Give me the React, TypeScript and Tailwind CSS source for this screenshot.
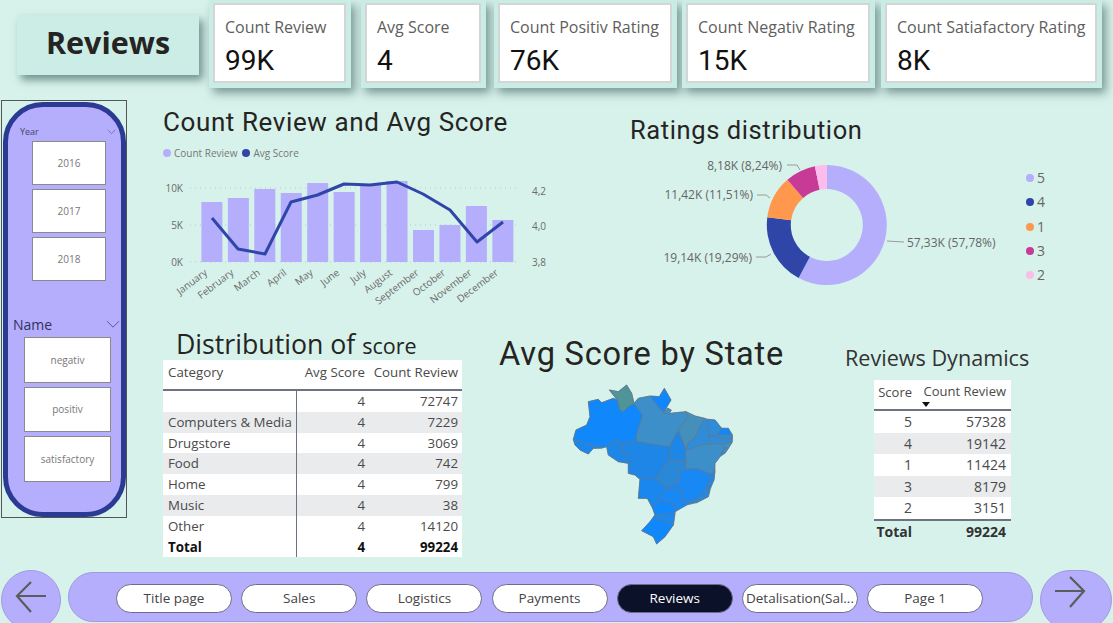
import React from "react";

const seg = { fontFamily: '"Open Sans", "Noto Sans", sans-serif' };
const din = { fontFamily: 'Roboto, "Noto Sans", sans-serif' };

const kpis = [
  { label: "Count Review", value: "99K", w: "w-[142px]", m: "ml-[10px]" },
  { label: "Avg Score", value: "4", w: "w-[125px]", m: "ml-[10px]" },
  { label: "Count Positiv Rating", value: "76K", w: "w-[183px]", m: "ml-[8px]" },
  { label: "Count Negativ Rating", value: "15K", w: "w-[193px]", m: "ml-[5px]" },
  { label: "Count Satiafactory Rating", value: "8K", w: "w-[221px]", m: "ml-[6px]" },
];

const months = ["January", "February", "March", "April", "May", "June", "July", "August", "September", "October", "November", "December"];
const tops = [202, 198, 189, 193, 183, 192, 185, 181, 230, 225, 206, 220];
const line = [[212, 218], [238, 249], [265, 254], [291, 202], [317.5, 195], [344, 184], [370, 185], [397, 182], [423, 194], [450, 210], [477, 242], [503, 222]];

function Kpi({ label, value, w, m }: { label: string; value: string; w: string; m: string }) {
  return (
    <div className={`${w} ${m} h-[88px] bg-[#c9ece5] pl-[4px] pr-[5px] pt-[3px] pb-[5px] shadow-[4px_5px_9px_rgba(70,105,105,0.65)]`}>
      <div className="h-full border-2 border-[#d4d6d6] bg-white pl-[10px] pt-[10px]">
        <div className="text-[16px] leading-[24px] text-[#605e5c] whitespace-nowrap" style={seg}>{label}</div>
        <div className="mt-[6px] text-[28px] leading-[32px] text-[#111111]" style={din}>{value}</div>
      </div>
    </div>
  );
}

function SlicerButton({ label, w, h }: { label: string; w: string; h: string }) {
  return (
    <div className={`${w} ${h} flex items-center justify-center border-[1.5px] border-[#8a8a8a] bg-white text-[10px] text-[#777777]`} style={seg}>
      {label}
    </div>
  );
}

function Chevron({ size }: { size: number }) {
  return (
    <svg width={size} height={size * 0.6} viewBox="0 0 14 8" fill="none" stroke="#5a5a8a" strokeWidth="1">
      <path d="M1 1l6 6 6-6" />
    </svg>
  );
}

function Sidebar() {
  return (
    <div className="ml-[1px] mt-[12px] h-[418px] w-[126px] border border-[#555555] pl-[1px] pr-0 pt-[1px]">
      <div className="h-[415px] w-[123px] rounded-[40px] border-[5px] border-[#2b3a92] bg-[#b4aefc]">
        <div className="mt-[19px] flex h-[12px] items-center justify-between pl-[12px] pr-[5px]">
          <span className="text-[9px] leading-[12px] text-[#44446a]" style={seg}>Year</span>
          <Chevron size={9} />
        </div>
        <div className="ml-[24px] mt-[3px] flex flex-col gap-[4px]">
          <SlicerButton label="2016" w="w-[74px]" h="h-[44px]" />
          <SlicerButton label="2017" w="w-[74px]" h="h-[44px]" />
          <SlicerButton label="2018" w="w-[74px]" h="h-[44px]" />
        </div>
        <div className="mt-[33px] flex h-[21px] items-center justify-between pl-[5px] pr-[1px]">
          <span className="text-[14px] leading-[20px] text-[#33335a]" style={seg}>Name</span>
          <Chevron size={14} />
        </div>
        <div className="ml-[16px] mt-[2px] flex flex-col gap-[4px]">
          <SlicerButton label="negativ" w="w-[87px]" h="h-[46px]" />
          <SlicerButton label="positiv" w="w-[87px]" h="h-[45px]" />
          <SlicerButton label="satisfactory" w="w-[87px]" h="h-[46px]" />
        </div>
      </div>
    </div>
  );
}

function ComboChart() {
  return (
    <svg width="400" height="150" viewBox="163 165 400 150" className="block">
      {[188, 225, 262].map((y) => (
        <line key={y} x1="190" x2="520" y1={y} y2={y} stroke="#b9c9c6" strokeWidth="1" strokeDasharray="1 4" />
      ))}
      {tops.map((t, i) => (
        <rect key={i} x={201.4 + i * 26.45} y={t} width="21" height={262 - t} fill="#b4aefc" />
      ))}
      <polyline points={line.map((p) => p.join(",")).join(" ")} fill="none" stroke="#2f46a8" strokeWidth="3" strokeLinejoin="round" />
      <g fontSize="10" fill="#6b6b6b" style={seg}>
        <text x="183" y="192" textAnchor="end">10K</text>
        <text x="183" y="229" textAnchor="end">5K</text>
        <text x="183" y="266" textAnchor="end">0K</text>
        <text x="532" y="195">4,2</text>
        <text x="532" y="230">4,0</text>
        <text x="532" y="266">3,8</text>
        {months.map((m, i) => (
          <text key={m} x={208 + i * 26.45} y="274" textAnchor="end" transform={`rotate(-37 ${208 + i * 26.45} 274)`}>{m}</text>
        ))}
      </g>
    </svg>
  );
}

const slices = [
  { v: 57.78, c: "#b4aefc" },
  { v: 19.29, c: "#2f46a8" },
  { v: 11.51, c: "#ff974d" },
  { v: 8.24, c: "#c73b96" },
  { v: 3.18, c: "#fdbcec" },
];

function arc(cx: number, cy: number, r0: number, r1: number, a0: number, a1: number) {
  const p = (r: number, a: number) => `${(cx + r * Math.sin(a)).toFixed(2)} ${(cy - r * Math.cos(a)).toFixed(2)}`;
  const large = a1 - a0 > Math.PI ? 1 : 0;
  return `M${p(r1, a0)}A${r1} ${r1} 0 ${large} 1 ${p(r1, a1)}L${p(r0, a1)}A${r0} ${r0} 0 ${large} 0 ${p(r0, a0)}Z`;
}

function Donut() {
  let acc = 0;
  return (
    <svg width="450" height="150" viewBox="630 152 450 150" className="mt-[6px] block">
      {slices.map((s) => {
        const a0 = (acc / 100) * Math.PI * 2;
        acc += s.v;
        const a1 = (acc / 100) * Math.PI * 2;
        return <path key={s.c} d={arc(826.8, 225, 36, 60, a0, a1)} fill={s.c} />;
      })}
      <g fill="none" stroke="#9a9a9a" strokeWidth="1">
        <path d="M787 165h10l3 5" />
        <path d="M757 195h9l4 3" />
        <path d="M756 257h10l5-3" />
        <path d="M887 241l17 1" />
      </g>
      <g fontSize="12" fill="#666666" style={seg}>
        <text x="782" y="170" textAnchor="end">8,18K (8,24%)</text>
        <text x="753" y="199" textAnchor="end">11,42K (11,51%)</text>
        <text x="752" y="262" textAnchor="end">19,14K (19,29%)</text>
        <text x="907" y="247">57,33K (57,78%)</text>
      </g>
      {[["5", 178], ["4", 202], ["1", 227], ["3", 251], ["2", 275]].map(([t, y], i) => (
        <g key={t as string}>
          <circle cx="1030" cy={y as number} r="4" fill={slices[i].c} />
          <text x="1037" y={(y as number) + 5} fontSize="14" fill="#666666" style={seg}>{t}</text>
        </g>
      ))}
    </svg>
  );
}

const silhouette =
  "40,178 48,150 80,135 90,110 85,65 115,58 125,68 160,55 172,60 148,30 175,35 200,15 215,40 222,70 235,55 270,48 298,50 313,25 333,60 312,95 330,100 378,95 405,108 440,117 465,120 485,145 505,145 517,165 517,187 505,205 495,220 480,230 465,250 465,272 462,300 450,330 445,350 410,368 380,375 345,395 345,400 340,435 315,470 290,492 280,470 245,452 270,425 285,405 278,385 262,355 235,355 240,298 225,285 205,280 205,250 175,245 145,225 140,200 125,205 100,205 85,222 60,210 45,195";

const states: [string, string][] = [
  ["#1088fc", "85,65 115,58 125,68 160,55 172,60 180,90 190,95 205,80 222,70 248,105 228,170 232,185 185,188 165,180 140,200 125,203 40,178 48,150 80,135 90,110"],
  ["#4f9499", "148,30 175,35 200,15 215,40 222,70 205,80 190,95 180,90 172,60"],
  ["#1088fc", "270,48 298,50 313,25 333,60 312,95 298,85"],
  ["#3d8fca", "222,70 235,55 270,48 298,85 312,100 330,100 378,95 385,110 355,150 328,200 232,185 228,170 248,105"],
  ["#1a87ee", "40,178 125,203 100,205 85,222 60,210 45,195"],
  ["#1e86e6", "140,200 165,180 185,188 190,215 208,228 205,250 175,245 145,225"],
  ["#1e86e6", "185,188 232,185 328,200 328,235 290,297 240,298 225,285 205,280 205,250 208,228 190,215"],
  ["#1a87ee", "240,298 262,295 290,297 320,325 300,345 300,360 278,385 262,355 235,355"],
  ["#1e86e6", "355,150 378,208 378,240 350,243 328,235 328,200"],
  ["#2a88d8", "328,235 350,243 378,242 378,267 360,270 358,305 320,322 290,297"],
  ["#1888f4", "360,270 378,267 410,265 452,282 440,325 420,350 395,365 370,365 360,325 320,325 320,322 358,305"],
  ["#4490ba", "378,95 405,108 435,115 420,140 405,172 385,188 378,208 355,150 385,110"],
  ["#2e8cd8", "435,115 440,118 447,170 447,192 415,197 385,210 378,208 385,188 405,172 420,140"],
  ["#2e8cd8", "440,118 465,120 485,145 472,165 447,170"],
  ["#1088fc", "485,145 505,145 517,165 495,165 472,165"],
  ["#2e8cd8", "472,165 495,165 517,165 517,175 495,178 475,172"],
  ["#2e8cd8", "447,170 472,165 475,172 495,178 517,175 515,187 485,192 447,192"],
  ["#3d8fca", "485,192 515,187 505,205 492,205"],
  ["#3d8fca", "492,205 505,205 495,220 485,218"],
  ["#3d8fca", "378,208 385,210 415,197 447,192 485,192 492,205 485,218 480,230 465,250 460,280 452,282 410,265 378,267 378,240"],
  ["#2088e0", "452,282 460,280 465,272 462,300 445,330 440,325"],
  ["#2a88d8", "440,325 445,330 450,330 445,350 410,368 395,365 420,350"],
  ["#1888f4", "320,325 360,325 370,365 395,365 380,375 345,395 340,370 300,360 300,345"],
  ["#1088fc", "300,360 340,370 345,395 345,400 285,405 278,385"],
  ["#1c87ee", "285,405 345,400 340,435 330,430 290,415"],
  ["#1088fc", "285,405 290,415 330,430 340,435 315,470 290,492 280,470 245,452 270,425"],
];

function BrazilMap() {
  return (
    <svg width="180" height="170" viewBox="0 0 540 510" className="block">
      <polygon points={silhouette} fill="#2088e0" stroke="#66788a" strokeWidth="2" strokeLinejoin="round" />
      {states.map(([c, p], i) => (
        <polygon key={i} points={p} fill={c} stroke="#66788a" strokeWidth="2" strokeLinejoin="round" />
      ))}
      <path d="M312 98l10-14 12 6-6 10" fill="#3d8fca" stroke="#66788a" strokeWidth="3" />
    </svg>
  );
}

const catRows = [
  ["", "4", "72747"],
  ["Computers & Media", "4", "7229"],
  ["Drugstore", "4", "3069"],
  ["Food", "4", "742"],
  ["Home", "4", "799"],
  ["Music", "4", "38"],
  ["Other", "4", "14120"],
];

function CategoryTable() {
  return (
    <div className="w-[299px] bg-white text-[13.3px] text-[#4a4a4a]" style={seg}>
      <div className="flex h-[31px] border-b-2 border-[#6b7280] pt-[2px] leading-[20px]">
        <div className="w-[134px] pl-[5px]">Category</div>
        <div className="w-[68px] text-right whitespace-nowrap">Avg Score</div>
        <div className="w-[93px] text-right whitespace-nowrap">Count Review</div>
      </div>
      {catRows.map((r, i) => (
        <div key={i} className={`flex h-[20.8px] leading-[20.8px] ${i % 2 === 1 ? "bg-[#e9ebed]" : "bg-white"}`}>
          <div className="w-[134px] border-r border-[#6b7280] pl-[5px] whitespace-nowrap">{r[0]}</div>
          <div className="w-[68px] text-right">{r[1]}</div>
          <div className="w-[93px] text-right">{r[2]}</div>
        </div>
      ))}
      <div className="flex h-[20.8px] font-bold leading-[20.8px] text-[#111111]">
        <div className="w-[134px] border-r border-[#6b7280] pl-[5px]">Total</div>
        <div className="w-[68px] text-right">4</div>
        <div className="w-[93px] text-right">99224</div>
      </div>
    </div>
  );
}

const dynRows = [["5", "57328"], ["4", "19142"], ["1", "11424"], ["3", "8179"], ["2", "3151"]];

function DynamicsTable() {
  return (
    <div className="w-[137px] text-[14px] text-[#4a4a4a]" style={seg}>
      <div className="flex h-[31px] border-b-2 border-[#6b7280] bg-white pt-[2px] leading-[20px]">
        <div className="w-[38px] text-right text-[13px]">Score</div>
        <div className="ml-[6px] flex w-[88px] flex-col items-end text-[13px] leading-[19px]">
          <span className="whitespace-nowrap">Count Review</span>
          <span className="mr-[76px] mt-[1px] h-0 w-0 border-x-[4px] border-t-[5px] border-x-transparent border-t-[#111111]" />
        </div>
      </div>
      {dynRows.map((r, i) => (
        <div key={i} className={`flex h-[21.6px] leading-[21.6px] ${i % 2 === 1 ? "bg-[#e9ebed]" : "bg-white"}`}>
          <div className="w-[38px] text-right">{r[0]}</div>
          <div className="ml-[6px] w-[88px] text-right">{r[1]}</div>
        </div>
      ))}
      <div className="flex h-[24px] border-t-2 border-[#6b7280] font-bold leading-[22px] text-[#333333]">
        <div className="w-[38px] text-right">Total</div>
        <div className="ml-[6px] w-[88px] text-right">99224</div>
      </div>
    </div>
  );
}

function Arrow({ right }: { right?: boolean }) {
  return (
    <svg width="32" height="32" viewBox="0 0 32 32" fill="none" stroke="#5c5c5c" strokeWidth="2.2" className="block">
      {right ? <path d="M1 15h29M16 1l14 14-14 16" /> : <path d="M31 15H2M16 1L2 15l14 16" />}
    </svg>
  );
}

const navs = ["Title page", "Sales", "Logistics", "Payments", "Reviews", "Detalisation(Sal...", "Page 1"];

function Nav() {
  return (
    <div className="flex h-[53px] items-start pl-[1px]">
      <div className="flex h-[60px] w-[60px] items-center justify-center rounded-[30px] border border-[#a09be0] bg-[#b4aefc] pb-[6px]">
        <Arrow />
      </div>
      <div className="ml-[7px] mt-[2px] flex h-[50px] w-[965px] items-start gap-[9.2px] rounded-[28px] border border-[#a09be0] bg-[#b4aefc] pl-[47px] pt-[10.5px]">
        {navs.map((n) => (
          <div
            key={n}
            className={`flex h-[29px] w-[116px] items-center justify-center rounded-[15px] border border-[#6d6d85] text-[13.5px] whitespace-nowrap ${n === "Reviews" ? "bg-[#0b1128] text-white" : "bg-white text-[#444444]"}`}
            style={seg}
          >
            {n}
          </div>
        ))}
      </div>
      <div className="ml-[7px] flex h-[60px] w-[72px] items-center justify-center rounded-[30px] border border-[#a09be0] bg-[#b4aefc] pb-[16px] pr-[12px]">
        <Arrow right />
      </div>
    </div>
  );
}

export default function App() {
  return (
    <div className="flex h-[623px] w-[1113px] flex-col overflow-hidden bg-[#d7f2ea]">
      <div className="flex h-[88px] shrink-0 items-start pl-[17px]">
        <div className="mt-[15px] flex h-[60px] w-[182px] items-center justify-center bg-[#ccede6] pb-[4px] text-[30.5px] font-bold text-[#252423] shadow-[4px_5px_8px_rgba(70,105,105,0.7)]" style={seg}>
          Reviews
        </div>
        {kpis.map((k) => (
          <Kpi key={k.label} {...k} />
        ))}
      </div>
      <div className="flex h-[482px] shrink-0">
        <Sidebar />
        <div className="flex flex-col pl-[36px]">
          <div className="flex h-[232px]">
            <div className="w-[440px] pt-[18px]">
              <div className="text-[26px] leading-[32px] tracking-[0.6px] text-[#252423]" style={din}>Count Review and Avg Score</div>
              <div className="mt-[8px] flex h-[14px] items-center gap-[3px] text-[10px] text-[#777777]" style={seg}>
                <span className="h-[8px] w-[8px] rounded-full bg-[#b4aefc]" />
                <span>Count Review</span>
                <span className="ml-[2px] h-[8px] w-[8px] rounded-full bg-[#2f46a8]" />
                <span>Avg Score</span>
              </div>
              <div className="mt-[5px]">
                <ComboChart />
              </div>
            </div>
            <div className="pl-[27px] pt-[26px]">
              <div className="text-[25.5px] leading-[32px] tracking-[0.6px] text-[#252423]" style={din}>Ratings distribution</div>
              <Donut />
            </div>
          </div>
          <div className="flex h-[250px]">
            <div className="w-[299px] pt-[7px]">
              <div className="h-[33px] pl-[13px] text-[26.7px] leading-[33px] text-[#252423] whitespace-nowrap" style={seg}>
                Distribution of <span className="text-[21.5px]">score</span>
              </div>
              <CategoryTable />
            </div>
            <div className="w-[383px] pl-[37px] pt-[14px]">
              <div className="text-[32.6px] leading-[40px] tracking-[0.8px] text-[#252423] whitespace-nowrap" style={din}>Avg Score by State</div>
              <div className="ml-[61px] mt-[6px]">
                <BrazilMap />
              </div>
            </div>
            <div className="pt-[24px]">
              <div className="h-[28px] text-[21.6px] leading-[28px] text-[#333333] whitespace-nowrap" style={seg}>Reviews Dynamics</div>
              <div className="ml-[29px] mt-[8px]">
                <DynamicsTable />
              </div>
            </div>
          </div>
        </div>
      </div>
      <Nav />
    </div>
  );
}
